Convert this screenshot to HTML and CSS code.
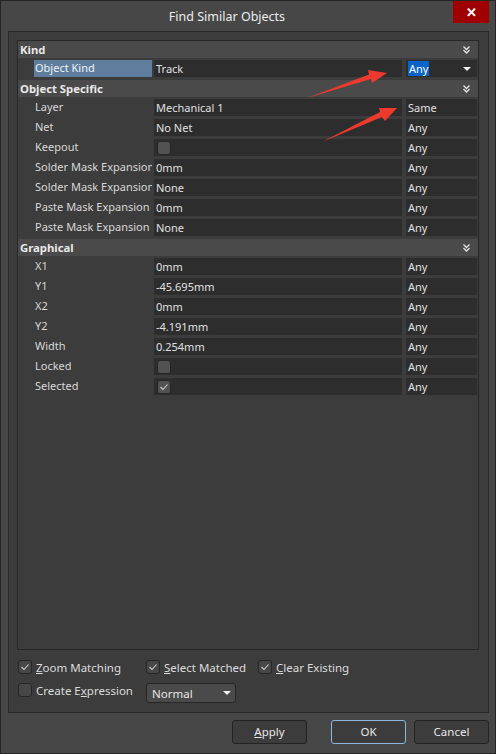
FILE: index.html
```html
<!DOCTYPE html>
<html>
<head>
<meta charset="utf-8">
<link rel="stylesheet" href="styles.css">
</head>
<body>
<div class="window">
  <div class="titlebar">
    <div class="title">Find Similar Objects</div>
    <div class="close">&#x2715;</div>
  </div>
  <div class="panel">
    <div class="grid">
      <div class="group first"><span>Kind</span><svg class="chev" width="7" height="8" viewBox="0 0 7 8"><polyline points="0.5,0.5 3.5,3.5 6.5,0.5" fill="none" stroke="#e6e6e6" stroke-width="1.3"/><polyline points="0.5,4 3.5,7 6.5,4" fill="none" stroke="#e6e6e6" stroke-width="1.3"/></svg></div>
      <div class="row"><div class="name picked">Object Kind</div><div class="val">Track</div><div class="any"><span class="hl">Any</span><span class="caret"></span></div></div>

      <div class="group"><span>Object Specific</span><svg class="chev" width="7" height="8" viewBox="0 0 7 8"><polyline points="0.5,0.5 3.5,3.5 6.5,0.5" fill="none" stroke="#e6e6e6" stroke-width="1.3"/><polyline points="0.5,4 3.5,7 6.5,4" fill="none" stroke="#e6e6e6" stroke-width="1.3"/></svg></div>
      <div class="row"><div class="name">Layer</div><div class="val">Mechanical 1</div><div class="any">Same</div></div>
      <div class="row"><div class="name">Net</div><div class="val">No Net</div><div class="any">Any</div></div>
      <div class="row"><div class="name">Keepout</div><div class="val"><span class="cb"></span></div><div class="any">Any</div></div>
      <div class="row"><div class="name">Solder Mask Expansion</div><div class="val">0mm</div><div class="any">Any</div></div>
      <div class="row"><div class="name">Solder Mask Expansion</div><div class="val">None</div><div class="any">Any</div></div>
      <div class="row"><div class="name">Paste Mask Expansion</div><div class="val">0mm</div><div class="any">Any</div></div>
      <div class="row"><div class="name">Paste Mask Expansion</div><div class="val">None</div><div class="any">Any</div></div>

      <div class="group"><span>Graphical</span><svg class="chev" width="7" height="8" viewBox="0 0 7 8"><polyline points="0.5,0.5 3.5,3.5 6.5,0.5" fill="none" stroke="#e6e6e6" stroke-width="1.3"/><polyline points="0.5,4 3.5,7 6.5,4" fill="none" stroke="#e6e6e6" stroke-width="1.3"/></svg></div>
      <div class="row"><div class="name">X1</div><div class="val">0mm</div><div class="any">Any</div></div>
      <div class="row"><div class="name">Y1</div><div class="val">-45.695mm</div><div class="any">Any</div></div>
      <div class="row"><div class="name">X2</div><div class="val">0mm</div><div class="any">Any</div></div>
      <div class="row"><div class="name">Y2</div><div class="val">-4.191mm</div><div class="any">Any</div></div>
      <div class="row"><div class="name">Width</div><div class="val">0.254mm</div><div class="any">Any</div></div>
      <div class="row"><div class="name">Locked</div><div class="val"><span class="cb"></span></div><div class="any">Any</div></div>
      <div class="row"><div class="name">Selected</div><div class="val"><span class="cb"><svg width="12" height="12" viewBox="0 0 12 12"><polyline points="2.5,6 5,8.5 9.5,3.5" fill="none" stroke="#cfcfcf" stroke-width="1.1"/></svg></span></div><div class="any">Any</div></div>
    </div>
    <div class="options">
      <label class="opt"><span class="box"><svg width="12" height="12" viewBox="0 0 12 12"><polyline points="2.5,6 5,8.5 9.5,3.5" fill="none" stroke="#cfcfcf" stroke-width="1.1"/></svg></span><span><u>Z</u>oom Matching</span></label>
      <label class="opt"><span class="box"><svg width="12" height="12" viewBox="0 0 12 12"><polyline points="2.5,6 5,8.5 9.5,3.5" fill="none" stroke="#cfcfcf" stroke-width="1.1"/></svg></span><span><u>S</u>elect Matched</span></label>
      <label class="opt"><span class="box"><svg width="12" height="12" viewBox="0 0 12 12"><polyline points="2.5,6 5,8.5 9.5,3.5" fill="none" stroke="#cfcfcf" stroke-width="1.1"/></svg></span><span><u>C</u>lear Existing</span></label>
      <label class="opt row2"><span class="box"></span><span>Create E<u>x</u>pression</span></label>
      <div class="combo row2"><span>Normal</span><span class="caret"></span></div>
    </div>
  </div>
  <div class="buttons">
    <div class="btn apply"><u>A</u>pply</div>
    <div class="btn ok">OK</div>
    <div class="btn">Cancel</div>
  </div>
  <svg class="annot" width="496" height="754" viewBox="0 0 496 754">
    <polygon points="307,98 369,74.5 368,70 387,73 372,83 371,79" fill="#ee3a2e"/>
    <polygon points="322,142 380,112 379,108 397,108 385,121 382,117" fill="#ee3a2e"/>
  </svg>
</div>
</body>
</html>
```
FILE: styles.css
```css
* { box-sizing: border-box; }
html, body { margin: 0; padding: 0; background: #474747; }
body {
  font-family: "Noto Sans", "Open Sans", sans-serif;
  font-size: 11px;
  color: #dcdcdc;
}
.window {
  position: relative;
  width: 496px;
  height: 754px;
  border: 1px solid #252525;
  background: #474747;
  display: flex;
  flex-direction: column;
}
.titlebar {
  height: 30px;
  display: flex;
  align-items: flex-start;
}
.title {
  flex: 1;
  text-align: center;
  font-size: 12.5px;
  line-height: 31px;
  color: #ececec;
}
.close {
  width: 36px;
  height: 22px;
  margin-right: 6px;
  background: #a10000;
  color: #ffffff;
  font-weight: bold;
  font-size: 13px;
  line-height: 22px;
  text-align: center;
}
.panel {
  margin: 0 6px 0 7px;
  height: 682px;
  border: 1px solid #2a2a2a;
  background: #3c3c3c;
  padding: 8px 9px 0 8px;
  display: flex;
  flex-direction: column;
}
.grid {
  height: 610px;
  border: 1px solid #272727;
  background: #3c3c3c;
}
.group {
  height: 17px;
  background: #4a4a4a;
  display: flex;
  align-items: center;
  justify-content: space-between;
  padding: 0 8px 0 2px;
  font-weight: bold;
  font-size: 11.3px;
  color: #e8e8e8;
  margin-bottom: 2px;
  line-height: 16px;
}
.row + .group { margin-top: 1px; }
.row {
  height: 17px;
  display: flex;
  margin-bottom: 3px;
  padding-left: 16px;
  line-height: 16px;
}
.name {
  width: 118px;
  padding-left: 1px;
  white-space: nowrap;
  overflow: hidden;
  color: #d8d8d8;
}
.name.picked { background: #5f7e9d; color: #eef2f6; }
.val {
  width: 248px;
  margin-left: 2px;
  background: #2d2d2d;
  padding-left: 2px;
  color: #e0e0e0;
  display: flex;
  align-items: center;
}
.any {
  flex: 1;
  margin-left: 4px;
  margin-right: 1px;
  background: #2d2d2d;
  padding-left: 2px;
  color: #e0e0e0;
  display: flex;
  align-items: center;
  justify-content: space-between;
}
.hl {
  background: #0a63c9;
  color: #ffffff;
  line-height: 15px;
  padding: 0 1px;
}
.caret {
  width: 0;
  height: 0;
  border-left: 4px solid transparent;
  border-right: 4px solid transparent;
  border-top: 4px solid #f2f2f2;
  margin-right: 6px;
}
.cb {
  width: 14px;
  height: 14px;
  margin-left: 1px;
  border: 1px solid #262626;
  border-radius: 3px;
  background: #525252;
  display: flex;
  align-items: center;
  justify-content: center;
}
.options {
  display: grid;
  grid-template-columns: 128px 112px auto;
  grid-template-rows: 14px 20px;
  row-gap: 9px;
  padding: 10px 0 0 1px;
  font-size: 11.5px;
}
.opt {
  display: flex;
  align-items: center;
  gap: 4px;
  height: 14px;
  white-space: nowrap;
  color: #dcdcdc;
}
.opt.row2 { align-self: start; }
.box {
  width: 14px;
  height: 14px;
  border: 1px solid #262626;
  border-radius: 3px;
  background: #474747;
  display: flex;
  align-items: center;
  justify-content: center;
  flex: none;
}
.combo {
  width: 90px;
  height: 20px;
  border: 1px solid #262626;
  border-radius: 3px;
  background: #4a4a4a;
  display: flex;
  align-items: center;
  justify-content: space-between;
  padding-left: 5px;
  color: #e6e6e6;
}
.combo .caret { margin-right: 4px; }
.buttons {
  display: flex;
  justify-content: flex-end;
  padding: 7px 6px 0 0;
  font-size: 11.5px;
}
.btn {
  width: 75px;
  height: 24px;
  border: 1px solid #232323;
  border-radius: 3px;
  background: #3c3c3c;
  text-align: center;
  line-height: 22px;
  color: #e6e6e6;
}
.btn.apply { margin-right: 24px; }
.btn.ok { margin-right: 8px; border-color: #8db5df; }
.annot {
  position: absolute;
  left: -1px;
  top: -1px;
  pointer-events: none;
}
```
